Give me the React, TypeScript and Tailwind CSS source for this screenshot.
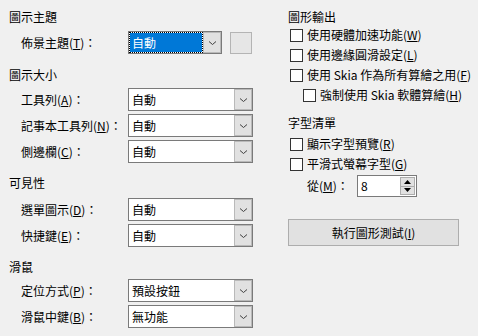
import React from 'react';

const FONT = { fontFamily: '"Noto Sans CJK TC", "Noto Sans", sans-serif' };

const Chevron = () => (
  <svg width="9" height="6" viewBox="0 0 9 6">
    <path d="M1 1.5 L4.5 4.5 L8 1.5" fill="none" stroke="#404040" strokeWidth="1" />
  </svg>
);

const Combo = ({ value, width, selected = false }: { value: string; width: string; selected?: boolean }) => (
  <div className={`flex h-[23px] border border-[#7a7a7a] bg-white ${width}`}>
    {selected ? (
      <div className="flex-1 flex items-center pl-[2px] bg-[#0078d7] text-white border border-white outline-1 outline-dotted outline-black -outline-offset-1">
        {value}
      </div>
    ) : (
      <div className="flex-1 flex items-center pl-[3px]">{value}</div>
    )}
    <div className="w-[18px] flex items-center justify-center bg-[#e1e1e1] border border-[#b9b9b9]">
      <Chevron />
    </div>
  </div>
);

const Title = ({ children, className = '' }: { children: React.ReactNode; className?: string }) => (
  <div className={`h-4 leading-4 ${className}`}>{children}</div>
);

const Row = ({ label, k, value }: { label: string; k: string; value: string }) => (
  <div className="flex items-center pl-[12px]">
    <div className="w-[107px] leading-4">
      {label}(<u>{k}</u>)：
    </div>
    <Combo value={value} width="w-[125px]" />
  </div>
);

const Check = ({ children, indent = false }: { children: React.ReactNode; indent?: boolean }) => (
  <div className={`flex items-center h-5 ${indent ? 'pl-[15px]' : 'pl-[2px]'}`}>
    <div className="w-[13px] h-[13px] border border-[#333] bg-white mr-[4px]" />
    <div className="leading-4">{children}</div>
  </div>
);

export default function App() {
  return (
    <div className="w-[478px] h-[336px] bg-[#f0f0f0] text-[12px] text-black flex" style={FONT}>
      {/* Left column */}
      <div className="w-[288px] pl-[9px] pt-[9px] flex flex-col">
        <Title>圖示主題</Title>
        <div className="flex items-center pl-[12px] mt-[6px]">
          <div className="w-[107px] leading-4">
            佈景主題(<u>T</u>)：
          </div>
          <Combo value="自動" width="w-[94px]" selected />
          <div className="w-[22px] h-[22px] ml-[8px] bg-[#e6e6e6] border border-[#b4b4b4]" />
        </div>

        <Title className="mt-[13px]">圖示大小</Title>
        <div className="flex flex-col gap-[3px] mt-[5px]">
          <Row label="工具列" k="A" value="自動" />
          <Row label="記事本工具列" k="N" value="自動" />
          <Row label="側邊欄" k="C" value="自動" />
        </div>

        <Title className="mt-[12px]">可見性</Title>
        <div className="flex flex-col gap-[3px] mt-[7px]">
          <Row label="選單圖示" k="D" value="自動" />
          <Row label="快捷鍵" k="E" value="自動" />
        </div>

        <Title className="mt-[12px]">滑鼠</Title>
        <div className="flex flex-col gap-[3px] mt-[4px]">
          <Row label="定位方式" k="P" value="預設按鈕" />
          <Row label="滑鼠中鍵" k="B" value="無功能" />
        </div>
      </div>

      {/* Right column */}
      <div className="flex-1 pt-[9px] flex flex-col">
        <Title>圖形輸出</Title>
        <div className="mt-[0px]">
          <Check>使用硬體加速功能(<u>W</u>)</Check>
          <Check>使用邊緣圓滑設定(<u>L</u>)</Check>
          <Check>使用 Skia 作為所有算繪之用(<u>F</u>)</Check>
          <Check indent>強制使用 Skia 軟體算繪(<u>H</u>)</Check>
        </div>

        <Title className="mt-[10px]">字型清單</Title>
        <div className="mt-[3px]">
          <Check>顯示字型預覽(<u>R</u>)</Check>
          <Check>平滑式螢幕字型(<u>G</u>)</Check>
        </div>
        <div className="flex items-center pl-[19px] mt-[1px]">
          <div className="w-[50px] leading-4">
            從(<u>M</u>)：
          </div>
          <div className="flex w-[60px] h-[22px] border border-[#7a7a7a] bg-white">
            <div className="flex-1 flex items-center pl-[3px]">8</div>
            <div className="w-[15px] flex flex-col my-[1px] mr-[1px]">
              <div className="flex-1 flex items-center justify-center bg-[#e1e1e1] border border-[#adadad]">
                <svg width="7" height="4" viewBox="0 0 7 4"><path d="M3.5 0 L7 4 L0 4 Z" fill="#000" /></svg>
              </div>
              <div className="flex-1 flex items-center justify-center bg-[#e1e1e1] border border-[#adadad] border-t-0">
                <svg width="7" height="4" viewBox="0 0 7 4"><path d="M0 0 L7 0 L3.5 4 Z" fill="#000" /></svg>
              </div>
            </div>
          </div>
        </div>

        <button className="mt-[22px] w-[171px] h-[27px] bg-[#e1e1e1] border border-[#adadad] flex items-center justify-center leading-4">
          執行圖形測試(<u>I</u>)
        </button>
      </div>
    </div>
  );
}
